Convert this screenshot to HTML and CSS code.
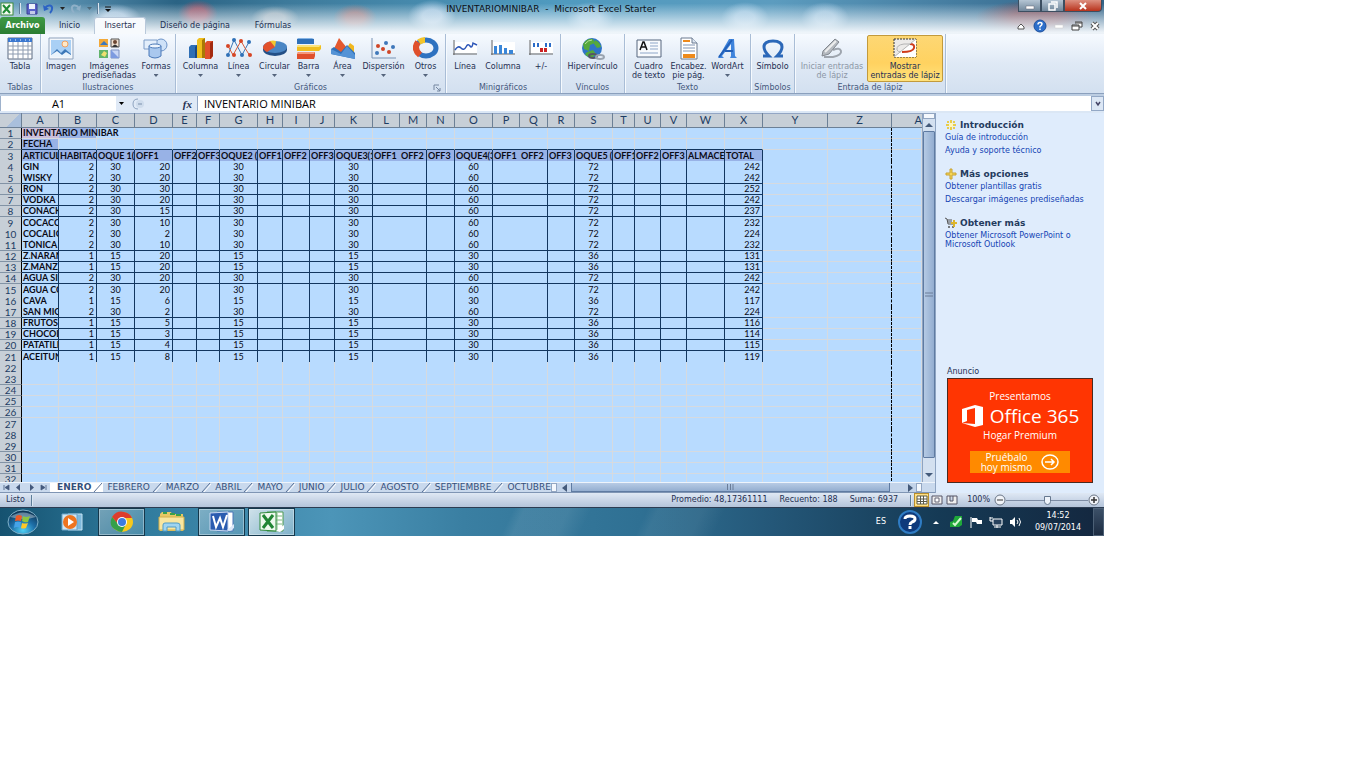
FILE: index.html
```html
<!DOCTYPE html>
<html lang="es">
<head>
<meta charset="utf-8">
<title>INVENTARIOMINIBAR - Microsoft Excel Starter</title>
<link rel="stylesheet" href="styles.css">
</head>
<body>
<main class="screen">
  <header class="titlebar">
    <div class="caption">
      <div class="quick">
        <svg width="14" height="14" viewBox="0 0 14 14"><rect x="1" y="1" width="12" height="12" fill="#f4faf2" stroke="#3c8a3c"/><path d="M3 3l7 8M10 3l-7 8" stroke="#1f8a34" stroke-width="2"/></svg>
        <i class="bar"></i>
        <button aria-label="Guardar"><svg width="12" height="12" viewBox="0 0 12 12"><path d="M1 1h10v10H1z" fill="#5a62c8" stroke="#3a3f94"/><path d="M3 1h6v5H3z" fill="#eef3fc"/><path d="M4 8h5v3H4z" fill="#c5cbe8"/></svg></button>
        <button aria-label="Deshacer"><svg width="12" height="12" viewBox="0 0 12 12"><path d="M2 5C5 1 10 2 9 6q0 2-2 4" fill="none" stroke="#2c63c4" stroke-width="2"/><path d="M0 2l1 6 5-2z" fill="#2c63c4"/></svg></button>
        <i class="drop"></i>
        <button aria-label="Rehacer"><svg width="12" height="12" viewBox="0 0 12 12"><path d="M9 5C6 1 1 2 2 6q0 2 2 4" fill="none" stroke="#8fb0c8" stroke-width="2"/><path d="M11 2l-1 6-4-2z" fill="#8fb0c8"/></svg></button>
        <i class="drop faint"></i>
        <i class="bar"></i>
        <svg width="8" height="8" viewBox="0 0 8 8"><path d="M1 2h6" stroke="#111"/><path d="M1 4h6L4 7z" fill="#111"/></svg>
      </div>
      <h1>INVENTARIOMINIBAR&nbsp; -&nbsp; Microsoft Excel Starter</h1>
      <div class="winbtns">
        <button aria-label="Minimizar"><svg width="12" height="10" viewBox="0 0 12 10"><path d="M2 5h8v3H2z" fill="#fff" stroke="#667" stroke-width=".5"/></svg></button>
        <button aria-label="Restaurar"><svg width="12" height="10" viewBox="0 0 12 10"><path d="M4 1h6v6M2 3h6v6H2z" fill="none" stroke="#fff" stroke-width="1.5"/></svg></button>
        <button class="close" aria-label="Cerrar"><svg width="12" height="10" viewBox="0 0 12 10"><path d="M3 2l6 6M9 2L3 8" stroke="#fff" stroke-width="2"/></svg></button>
      </div>
    </div>
    <nav class="tabs">
      <button class="file">Archivo</button>
      <button class="t1">Inicio</button>
      <button class="t2 on">Insertar</button>
      <button class="t3">Diseño de página</button>
      <button class="t4">Fórmulas</button>
      <div class="helpbtns">
        <svg width="10" height="10" viewBox="0 0 10 10"><path d="M2 6l3-3 3 3v2H2z" fill="#fff" stroke="#555"/></svg>
        <svg width="14" height="14" viewBox="0 0 14 14"><circle cx="7" cy="7" r="6" fill="#2d6fcb" stroke="#1d4f9c"/><path d="M5 5.500q0-2 2-2t2 1.500q0 1-2 2.500v1M7 9.500v1.500" fill="none" stroke="#fff" stroke-width="1.500"/></svg>
        <svg width="10" height="10" viewBox="0 0 10 10"><path d="M1 4h8v3H1z" fill="#fff" stroke="#ccc" stroke-width=".5"/></svg>
        <svg width="12" height="10" viewBox="0 0 12 10"><path d="M4 1h7v5H8M1 4h7v5H1z" fill="#fff" stroke="#444"/><path d="M4 2h7M1 5h7" stroke="#444"/></svg>
        <svg width="10" height="10" viewBox="0 0 10 10"><path d="M2 2l6 6M8 2L2 8" stroke="#555" stroke-width="4"/><path d="M2 2l6 6M8 2L2 8" stroke="#fff" stroke-width="2"/></svg>
      </div>
    </nav>
  </header>

  <section class="ribbon">
    <div class="group g1"><div class="items">
      <button class="it w40"><svg width="26" height="24" viewBox="0 0 26 24"><path d="M1 1h24v21H1z" fill="#fff" stroke="#5c6b80"/><path d="M1 1h24v4H1z" fill="#3b78d0"/><path d="M1 9h24M1 13h24M1 17h24M6 5v17M11 5v17M16 5v17M21 5v17" stroke="#8d9bb0"/><path d="M3 3h1M8 3h1M13 3h1M18 3h1M22 3h1" stroke="#fff"/></svg><span>Tabla</span></button>
    </div><h2>Tablas</h2></div>
    <div class="group g2"><div class="items">
      <button class="it w38"><svg width="26" height="24" viewBox="0 0 26 24"><path d="M1 1h24v21H1z" fill="#f4f7fb" stroke="#8fa3bd"/><path d="M3 3h20v17H3z" fill="#a9d0f5"/><circle cx="17" cy="7" r="3" fill="#ffe9c8" stroke="#f0a060"/><path d="M3 18l6-6 4 4 4-4 6 5v3H3z" fill="#3c78b8"/><path d="M3 18l6-4 5 4 4-3 5 3v2H3z" fill="#eaf4fc"/></svg><span>Imagen</span></button>
      <button class="it w58"><svg width="24" height="24" viewBox="0 0 24 24"><path d="M2 2h9v8H2z" fill="#f3a93a"/><path d="M3 8l4-4 4 4z" fill="#3b78c0"/><path d="M14 2h8v8h-8z" fill="#efe0d0" stroke="#555"/><circle cx="18" cy="5" r="2" fill="#6b4632"/><path d="M15 10q3-5 6 0z" fill="#333"/><path d="M2 13h9v8H2z" fill="#62b36b"/><path d="M4 18l3-4 3 2-2 4z" fill="#f0e070"/><path d="M14 13h8v8h-8z" fill="#c8d6f5" stroke="#7b8fc0"/><path d="M14 13l8 8h-8z" fill="#7d9be0"/></svg><span>Imágenes<br>prediseñadas</span></button>
      <button class="it w36"><svg width="26" height="24" viewBox="0 0 26 24"><circle cx="18" cy="8" r="6" fill="#cfe2f8" stroke="#6d94c8"/><path d="M1 3h13v9H1z" fill="#e3eefb" stroke="#7c9cc8"/><path d="M6 9v10q6 4 12 0V9z" fill="#a9c8ee" stroke="#4a79b8"/><ellipse cx="12" cy="9" rx="6" ry="2" fill="#eef5fd" stroke="#4a79b8"/></svg><span>Formas</span><i class="drop"></i></button>
    </div><h2>Ilustraciones</h2></div>
    <div class="group g3"><div class="items">
      <button class="it w38"><svg width="26" height="24" viewBox="0 0 26 24"><path d="M1 10l2-2h6v13H1z" fill="#2f6fb5"/><path d="M7 10l2-2v13H7z" fill="#1b4a84"/><path d="M9 3l2-2h6v20H9z" fill="#efbf1d"/><path d="M14 3l3-2v20h-3z" fill="#a87a06"/><path d="M17 6l2-2h6v15l-2 3h-6z" fill="#e0502c"/><path d="M22 6l3-2v15l-3 3z" fill="#a32a10"/></svg><span>Columna</span><i class="drop"></i></button>
      <button class="it w38"><svg width="26" height="24" viewBox="0 0 26 24"><path d="M2 18L8 3l8 15 7-13" fill="none" stroke="#3d78b8"/><path d="M2 9l5 9 8-14 4 7 5 8" fill="none" stroke="#d85a38"/><g fill="#3071b8"><circle cx="2" cy="18" r="2"/><circle cx="8" cy="3" r="2"/><circle cx="16" cy="18" r="2"/><circle cx="23" cy="5" r="2"/></g><g fill="#d64525"><circle cx="2" cy="9" r="2"/><circle cx="8" cy="18" r="2"/><circle cx="15" cy="4" r="2"/><circle cx="24" cy="18" r="2"/></g></svg><span>Línea</span><i class="drop"></i></button>
      <button class="it w34"><svg width="26" height="24" viewBox="0 0 26 24"><path d="M1 10v3q0 5 12 6 12-1 12-6v-3z" fill="#234f86"/><ellipse cx="13" cy="10" rx="12" ry="6" fill="#4a86c4"/><path d="M13 10L5 15Q-1 12 2 8q2-3 7-4z" fill="#e2512c"/><path d="M13 10L8 4q3-1 6-0z" fill="#f2c830"/></svg><span>Circular</span><i class="drop"></i></button>
      <button class="it w34"><svg width="26" height="24" viewBox="0 0 26 24"><path d="M1 2h17v5H1z" fill="#2f70b8"/><path d="M1 2h17l-2-1H2z" fill="#86b4e4"/><path d="M1 9l2-1h22v4l-2 2H1z" fill="#f0bf20"/><path d="M1 9l2-1h22l-2 2H1z" fill="#fbe37c"/><path d="M1 16l2-1h16v4l-1 3H1z" fill="#e0502c"/><path d="M1 16l2-1h16l-1 2H1z" fill="#f59a7c"/></svg><span>Barra</span><i class="drop"></i></button>
      <button class="it w34"><svg width="26" height="24" viewBox="0 0 26 24"><path d="M3 14L9 1l8 10 3-4 4 5v9z" fill="#e4582e"/><path d="M17 11l3-5 4 3v9z" fill="#f1b81f"/><path d="M1 12l3-2 7 5 6-7 8 8v6L1 17z" fill="#2f70b8"/><path d="M1 12l10 5 6-8 8 9v4L1 17z" fill="#5493d6"/></svg><span>Área</span><i class="drop"></i></button>
      <button class="it w48"><svg width="26" height="24" viewBox="0 0 26 24"><path d="M1 1v20h24" fill="none" stroke="#7993b4"/><g fill="#cf4628"><circle cx="7" cy="9" r="2"/><circle cx="12" cy="12" r="2"/><circle cx="18" cy="15" r="2"/></g><g fill="#3f78ba"><circle cx="6" cy="16" r="2"/><circle cx="15" cy="6" r="2"/><circle cx="22" cy="10" r="2"/></g></svg><span>Dispersión</span><i class="drop"></i></button>
      <button class="it w36"><svg width="26" height="24" viewBox="0 0 26 24"><ellipse cx="13" cy="11" rx="10" ry="8" fill="none" stroke="#2e72c0" stroke-width="5"/><path d="M7 18Q0 12 5 5" fill="none" stroke="#e0502c" stroke-width="6"/><path d="M6 5q3-2 6-2" fill="none" stroke="#f3c52b" stroke-width="6"/></svg><span>Otros</span><i class="drop"></i></button>
    </div><h2>Gráficos</h2><svg class="launch" width="8" height="8" viewBox="0 0 8 8"><path d="M1 6V1h5M3 3l4 4M7 4v3H4" fill="none" stroke="#7486a0"/></svg></div>
    <div class="group g4"><div class="items">
      <button class="it w38"><svg width="26" height="24" viewBox="0 0 26 24"><path d="M3 5h22v11H3z" fill="#fff"/><path d="M2 3v15M1 17h24" stroke="#666"/><path d="M3 13q3-5 6-2t5-1 4-1 3-3l4 2" fill="none" stroke="#2c56b8" stroke-width="1.500"/></svg><span>Línea</span></button>
      <button class="it w38"><svg width="26" height="24" viewBox="0 0 26 24"><path d="M3 5h22v11H3z" fill="#fff"/><path d="M2 3v15M1 17h24" stroke="#666"/><path d="M4 9h3v8H4zM9 8h3v9H9zM14 11h3v6h-3zM19 13h4v4h-4z" fill="#3a86d8"/></svg><span>Columna</span></button>
      <button class="it w38"><svg width="26" height="24" viewBox="0 0 26 24"><path d="M3 5h22v11H3z" fill="#fff"/><path d="M2 3v15M1 17h24" stroke="#666"/><path d="M5 6h2v4H5zM9 6h2v4H9zM17 6h2v4h-2zM21 6h2v4h-2z" fill="#2b6cc8"/><path d="M12 11h3v4h-3zM16 11h3v4h-3z" fill="#c22"/></svg><span>+/-</span></button>
    </div><h2>Minigráficos</h2></div>
    <div class="group g5"><div class="items">
      <button class="it w60"><svg width="28" height="24" viewBox="0 0 28 24"><circle cx="13" cy="11" r="10" fill="#2f74c8"/><path d="M4 7q4-6 10-5l2 4-5 2-1 6-5-2zM16 3q5 2 6 7l-4 1-3-4zM8 15l6-2 3 4-4 4q-5-1-7-4z" fill="#55a83c"/><path d="M6 7q3-4 7-4" stroke="#b8e0a0" fill="none"/><ellipse cx="14" cy="19" rx="4" ry="2" fill="none" stroke="#556" stroke-width="2"/><ellipse cx="21" cy="20" rx="4" ry="2" fill="none" stroke="#9aa4b0" stroke-width="2"/></svg><span>Hipervínculo</span></button>
    </div><h2>Vínculos</h2></div>
    <div class="group g6"><div class="items">
      <button class="it w40"><svg width="26" height="24" viewBox="0 0 26 24"><path d="M1 3h24v17H1z" fill="#f8fafd" stroke="#56677f"/><path d="M4 13l3-8h1l3 8M5 10h5" fill="none" stroke="#111" stroke-width="1.500"/><path d="M14 6h8M14 9h8M14 12h8M4 16h18" stroke="#8ea6c8"/></svg><span>Cuadro<br>de texto</span></button>
      <button class="it w40"><svg width="22" height="24" viewBox="0 0 22 24"><path d="M3 1h11l5 5v16H3z" fill="#fff" stroke="#6b7a90"/><path d="M14 1v5h5" fill="#dde6f2" stroke="#6b7a90"/><path d="M5 4h7M5 18h12M5 20h12" stroke="#ee8a1c" stroke-width="2"/><path d="M5 8h12M5 11h12M5 14h12" stroke="#8195b4"/></svg><span>Encabez.<br>pie pág.</span></button>
      <button class="it w38"><svg width="24" height="24" viewBox="0 0 24 24"><path d="M13 2h5l1 17 2 2h-7l1-2V7L6 19l2 2H2z" fill="#3f84dc"/><path d="M3 20L16 3M9 14h8" fill="none" stroke="#2360b8" stroke-width="2"/></svg><span>WordArt</span><i class="drop"></i></button>
    </div><h2>Texto</h2></div>
    <div class="group g7"><div class="items">
      <button class="it w44"><svg width="24" height="24" viewBox="0 0 24 24"><path d="M2 19h6q-5-5-5-9 0-6 9-6t9 6q0 4-5 9h6" fill="none" stroke="#2c68b8" stroke-width="3"/></svg><span>Símbolo</span></button>
    </div><h2>Símbolos</h2></div>
    <div class="group g8"><div class="items">
      <button class="it w70" disabled><svg width="24" height="24" viewBox="0 0 24 24"><path d="M4 20h9q9-2 8-6t-8-1" fill="none" stroke="#9ea5ae" stroke-width="2"/><path d="M3 14L15 2l4 3L9 17l-7 2z" fill="#b5bac0" stroke="#83888f"/><path d="M5 15L16 4" stroke="#eee" stroke-width="2"/></svg><span>Iniciar entradas<br>de lápiz</span></button>
      <button class="it w76 sel"><svg width="26" height="24" viewBox="0 0 26 24"><path d="M2 2h22v18H2z" fill="#eceae8" stroke="#333" stroke-dasharray="2 1"/><path d="M24 2v18H2z" fill="#fff"/><path d="M18 7q5 0 4 4t-12 4" fill="none" stroke="#cf3d1c" stroke-width="2"/><path d="M2 20L24 2M18 7H12q-8 1-7 6 1 2 4 2" fill="none" stroke="#b4b4b4"/></svg><span>Mostrar<br>entradas de lápiz</span></button>
    </div><h2>Entrada de lápiz</h2></div>
  </section>

  <section class="formula">
    <input class="namebox" aria-label="Cuadro de nombres" value="A1">
    <i class="drop"></i>
    <div class="fx"><svg width="14" height="12" viewBox="0 0 14 12"><path d="M6 1q-5 0-5 5t5 5" fill="none" stroke="#8fa4c0"/><circle cx="8" cy="6" r="4" fill="#cfdcec"/><path d="M6 6h4" stroke="#a5b6cc" stroke-width="2"/></svg><em>fx</em></div>
    <input class="fbar" aria-label="Barra de fórmulas" value="INVENTARIO MINIBAR">
    <button aria-label="Expandir"><svg width="8" height="8" viewBox="0 0 8 8"><path d="M2 2l2 3 2-3" fill="none" stroke="#446" stroke-width="1.5"/></svg></button>
  </section>

  <section class="work">
    <div class="book">
      <div class="pane">
        <div class="gridwrap"><table class="grid" id="grid"></table></div>
        <div class="vscroll">
          <i class="split"></i>
          <button aria-label="Subir"><svg width="8" height="5" viewBox="0 0 8 5"><path d="M0 4l4-4 4 4z" fill="#445a7a"/></svg></button>
          <div class="vthumb"><svg width="8" height="6" viewBox="0 0 8 6"><path d="M0 1h8M0 4h8" stroke="#6a7d98"/></svg></div>
          <button aria-label="Bajar"><svg width="8" height="5" viewBox="0 0 8 5"><path d="M0 1h8L4 5z" fill="#445a7a"/></svg></button>
        </div>
      </div>
      <div class="sheetbar">
        <div class="sheetnav">
          <button aria-label="Primera"><svg width="7" height="7" viewBox="0 0 7 7"><path d="M1 1v5M6 1v5L2 3.500z" stroke="#44597c" fill="#44597c" stroke-width=".8"/></svg></button>
          <button aria-label="Anterior"><svg width="7" height="7" viewBox="0 0 7 7"><path d="M5 0v7L1 3.500z" fill="#44597c"/></svg></button>
          <button aria-label="Siguiente"><svg width="7" height="7" viewBox="0 0 7 7"><path d="M2 0v7l4-3.500z" fill="#44597c"/></svg></button>
          <button aria-label="Última"><svg width="7" height="7" viewBox="0 0 7 7"><path d="M6 1v5M1 1v5l4-2.500z" stroke="#44597c" fill="#44597c" stroke-width=".8"/></svg></button>
        </div>
        <div class="sheets" id="sheets"></div>
        <i class="split"></i>
        <div class="hscroll">
          <button aria-label="Izquierda"><svg width="5" height="8" viewBox="0 0 5 8"><path d="M5 0v8L0 4z" fill="#445a7a"/></svg></button>
          <div class="hthumb"><svg width="8" height="6" viewBox="0 0 8 6"><path d="M1.500 0v6M4.500 0v6M7 0v6" stroke="#6a7d98"/></svg></div>
          <button aria-label="Derecha"><svg width="5" height="8" viewBox="0 0 5 8"><path d="M0 0v8l5-4z" fill="#445a7a"/></svg></button>
        </div>
        <i class="split"></i>
      </div>
    </div>
    <aside class="panel">
      <h3><svg width="12" height="12" viewBox="0 0 12 12"><path d="M2 2h2v2H2zM5 1h2v3H5zM8 2h2v2H8zM1 5h3v2H1zM8 5h3v2H8zM2 8h2v2H2zM5 8h2v3H5zM8 8h2v2H8z" fill="#e8cc4c"/><path d="M4 4h4v4H4z" fill="#fff6b8"/></svg>Introducción</h3>
      <a href="#guia">Guía de introducción</a>
      <a href="#ayuda">Ayuda y soporte técnico</a>
      <h3><svg width="12" height="12" viewBox="0 0 12 12"><path d="M5 1h2v4h4v2H7v4H5V7H1V5h4z" fill="#f5d657" stroke="#c8a232"/></svg>Más opciones</h3>
      <a href="#plantillas">Obtener plantillas gratis</a>
      <a href="#imagenes">Descargar imágenes prediseñadas</a>
      <h3><svg width="12" height="12" viewBox="0 0 12 12"><path d="M0 1l2 1 1 5h5M2 3h5M3 5h4" fill="none" stroke="#555"/><circle cx="4" cy="10" r="1" fill="#555"/><circle cx="8" cy="10" r="1" fill="#555"/><path d="M9 3v7M6 6h6" stroke="#dcb52c" stroke-width="2"/></svg>Obtener más</h3>
      <a class="two" href="#mas">Obtener Microsoft PowerPoint o<br>Microsoft Outlook</a>
      <p class="adlabel">Anuncio</p>
      <div class="ad">
        <p>Presentamos</p>
        <div class="brand"><svg width="24" height="24" viewBox="0 0 24 24"><path d="M1 5l13-4 8 2v18l-8 2-13-4 13 1V4L6 6v11l-5 2z" fill="#fff"/></svg><b>Office 365</b></div>
        <p>Hogar Premium</p>
        <button>Pruébalo<br>hoy mismo<svg width="18" height="16" viewBox="0 0 18 16"><ellipse cx="9" cy="8" rx="8" ry="7" fill="none" stroke="#fff" stroke-width="1.500"/><path d="M4 8h9M10 5l3 3-3 3" fill="none" stroke="#fff" stroke-width="1.500"/></svg></button>
      </div>
    </aside>
  </section>

  <footer class="status">
    <span class="ready">Listo</span><i class="bar"></i>
    <span class="avg">Promedio: 48,17361111</span>
    <span>Recuento: 188</span>
    <span>Suma: 6937</span>
    <i class="bar"></i>
    <div class="views">
      <button class="on" aria-label="Normal"><svg width="12" height="10" viewBox="0 0 12 10"><path d="M1 1h10v8H1zM1 4h10M1 6.500h10M4.500 1v8M7.500 1v8" fill="#fff" stroke="#5a5a48"/></svg></button>
      <button aria-label="Diseño"><svg width="12" height="10" viewBox="0 0 12 10"><path d="M1 1h10v8H1z" fill="#eee" stroke="#556"/><path d="M4 3h4v4H4z" fill="#fff" stroke="#667"/></svg></button>
      <button aria-label="Saltos"><svg width="12" height="10" viewBox="0 0 12 10"><path d="M1 1h10v8H1zM4 1v5h3V1" fill="#eee" stroke="#556"/></svg></button>
    </div>
    <span class="pct">100%</span>
    <button class="round" aria-label="Alejar"><svg width="12" height="12" viewBox="0 0 12 12"><circle cx="6" cy="6" r="5" fill="#f0f3f8" stroke="#6b7788"/><path d="M3 6h6" stroke="#333"/></svg></button>
    <input type="range" aria-label="Zoom" min="0" max="100" value="50">
    <button class="round" aria-label="Acercar"><svg width="12" height="12" viewBox="0 0 12 12"><circle cx="6" cy="6" r="5" fill="#f0f3f8" stroke="#6b7788"/><path d="M3 6h6M6 3v6" stroke="#333" stroke-width="1.500"/></svg></button>
  </footer>

  <footer class="taskbar">
    <button class="orb" aria-label="Inicio"><svg width="32" height="28" viewBox="0 0 32 28"><defs><radialGradient id="o" cx=".5" cy=".85" r=".8"><stop offset="0" stop-color="#4fd0f4"/><stop offset=".5" stop-color="#1d6fa8"/><stop offset="1" stop-color="#0e3554"/></radialGradient></defs><ellipse cx="16" cy="14" rx="15" ry="12" fill="url(#o)" stroke="#7fb0c8"/><path d="M3 9q13-9 26 0-12 4-26 0z" fill="#fff" opacity=".35"/><path d="M9 8q3-2 6 0l-1 5q-3-1-6 0z" fill="#ee5a28"/><path d="M16 8q3 2 7 0l-2 6q-3 1-6-1z" fill="#8cc63e"/><path d="M8 14q3-1 6 0l-1 6q-3-2-6 0z" fill="#45a4e8"/><path d="M15 15q3 1 6 0l-2 5q-3 1-5-0z" fill="#fcc826"/></svg></button>
    <button class="app" aria-label="Reproductor"><svg width="22" height="20" viewBox="0 0 22 20"><path d="M7 2h14v16H7z" fill="#7fb9dc" stroke="#c5e4f4"/><path d="M1 2h15v16H1z" fill="#cfe6f5" stroke="#6aa4c8"/><circle cx="9" cy="10" r="7" fill="#ee7420"/><path d="M7 6l6 4-6 4z" fill="#fff"/></svg></button>
    <button class="app open" aria-label="Chrome"><svg width="24" height="22" viewBox="0 0 24 22"><ellipse cx="12" cy="11" rx="11" ry="10" fill="#f8c81c"/><path d="M2 6Q7-1 14 1q6 1 8 6H12L8 13z" fill="#dd3c2c"/><path d="M2 6q-4 9 4 13 3 2 6 2l4-8-7 1z" fill="#35a04a"/><circle cx="12" cy="11" r="5" fill="#fff"/><circle cx="12" cy="11" r="4" fill="#3c7ce0"/></svg></button>
    <button class="app" aria-label="Explorador"><svg width="28" height="22" viewBox="0 0 28 22"><path d="M2 3l2-2h9l1 2h11v17H2z" fill="#e7c866"/><path d="M5 2h4M12 3h5M18 4h5" stroke="#3aa04a" stroke-width="2"/><path d="M1 6h25v13H1z" fill="#f8e6a0" stroke="#d2ae48"/><path d="M5 20v-6q0-2 2-2h12q3 0 3 2v6h-4v-4H9v4z" fill="#9fd4f0" stroke="#4f9cc8"/></svg></button>
    <button class="app open" aria-label="Word"><svg width="26" height="22" viewBox="0 0 26 22"><path d="M8 1h16v19H8z" fill="#fff" stroke="#4b76b8"/><path d="M1 2l18-1v19L1 19z" fill="#2a5cb0" stroke="#c8d8f0"/><path d="M4 5l3 11 4-9 3 9 4-12" fill="none" stroke="#fff" stroke-width="2"/><path d="M18 19l7-6v4l-4 3z" fill="#dce8f8"/></svg></button>
    <button class="app open lit" aria-label="Excel"><svg width="26" height="22" viewBox="0 0 26 22"><path d="M8 1h16v19H8z" fill="#fff" stroke="#4c9a50"/><path d="M13 5h10M13 9h10M13 13h10M18 2v17" stroke="#7dba80"/><path d="M1 2l16-1v19L1 19z" fill="#eef8ee" stroke="#2f8a3c"/><path d="M4 4l10 13M14 4L4 17" stroke="#218434" stroke-width="3"/><path d="M17 20l8-6v4l-4 3z" fill="#fff"/></svg></button>
    <div class="tray">
      <span class="lang">ES</span>
      <svg width="26" height="24" viewBox="0 0 26 24"><circle cx="13" cy="12" r="11" fill="#0e3a7c" stroke="#2f7cc4" stroke-width="2"/><path d="M8 9q0-3 5-3t5 3q0 2-3 3-2 1-2 3M13 16v3" fill="none" stroke="#fff" stroke-width="3"/></svg>
      <svg width="14" height="8" viewBox="0 0 14 8"><path d="M4 6h6L7 3z" fill="#fff"/></svg>
      <svg width="14" height="14" viewBox="0 0 14 14"><path d="M1 7l3-1 2-5h7v9l-3 2H1z" fill="#1fa83a"/><path d="M4 8l2 2 6-7" fill="none" stroke="#d4f8d0" stroke-width="2"/></svg>
      <svg width="14" height="14" viewBox="0 0 14 14"><path d="M2 2v11" stroke="#fff"/><path d="M3 3h5l1 2h4v4H8L7 7H3z" fill="#fff"/></svg>
      <svg width="14" height="14" viewBox="0 0 14 14"><path d="M4 4h9v6H4zM8 10v3M5 12h7M1 2v4h3M1 3h3" fill="#27415c" stroke="#fff"/></svg>
      <svg width="14" height="14" viewBox="0 0 14 14"><path d="M1 5h2l3-3v10L3 9H1z" fill="#fff"/><path d="M8 5q2 2 0 4M10 3q3 4 0 8" fill="none" stroke="#fff"/></svg>
      <time>14:52<br>09/07/2014</time>
      <button class="desk" aria-label="Mostrar escritorio"></button>
    </div>
  </footer>
</main>
<script src="app.js"></script>
</body>
</html>
```

FILE: styles.css
```css
* { box-sizing: border-box; }
body { margin: 0; background: #fff; }
button, input { font: inherit; color: inherit; margin: 0; padding: 0; border: 0; background: none; }
button { display: flex; align-items: center; justify-content: center; }
svg { display: block; flex: none; }
h1, h2, h3, p { margin: 0; font-weight: 400; }
.screen { max-width: 1104px; display: flex; flex-direction: column; overflow: hidden; font: 8px/10px "DejaVu Sans", sans-serif; color: #1e2f52; }
.drop { flex: none; width: 5px; height: 3px; background: #222; clip-path: polygon(0 0, 100% 0, 50% 100%); }
.faint { opacity: .4; }
.bar { flex: none; width: 2px; height: 11px; border-left: 1px solid #5d7d99; border-right: 1px solid #dbe7f2; }

/* Title bar */
.titlebar {
  background:
    linear-gradient(to bottom, rgba(240,246,251,0) 10%, rgba(240,246,251,.6) 60%, rgba(244,248,252,.96) 95%),
    radial-gradient(ellipse 20px 14px at 198px 14px, rgba(190,80,96,.7) 40%, transparent),
    radial-gradient(ellipse 22px 14px at 355px 18px, rgba(200,110,100,.6) 40%, transparent),
    radial-gradient(ellipse 24px 12px at 275px 18px, rgba(190,195,200,.7) 40%, transparent),
    radial-gradient(ellipse 26px 14px at 115px 18px, rgba(200,222,244,.7) 40%, transparent),
    radial-gradient(ellipse 24px 16px at 432px 16px, rgba(205,225,245,.7) 40%, transparent),
    radial-gradient(ellipse 24px 16px at 590px 18px, rgba(200,225,245,.6) 40%, transparent),
    radial-gradient(ellipse 24px 16px at 745px 18px, rgba(200,225,245,.6) 40%, transparent),
    radial-gradient(ellipse 24px 16px at 825px 18px, rgba(200,225,245,.6) 40%, transparent),
    radial-gradient(ellipse 60px 18px at 1035px 18px, rgba(140,60,66,.7) 40%, transparent),
    linear-gradient(to right, #6fa5c4, #2a6384 16%, #3d7a9b 26%, #4f9abf 50%, #5c9cbf 70%, #326387);
}
.caption { display: flex; height: 17px; align-items: center; }
.quick { display: flex; align-items: center; gap: 5px; flex: 1; }
.caption h1 { font: 9px/12px "DejaVu Sans", sans-serif; color: #0b0f14; white-space: nowrap; }
.winbtns { flex: 1; display: flex; justify-content: flex-end; align-self: flex-start; padding-right: 2px; }
.winbtns button { width: 23px; height: 12px; background: linear-gradient(#b5c5d4, #71879b); border: 1px solid #3c4e60; border-top: 0; }
.winbtns .close { width: 38px; background: linear-gradient(#dd9080, #b8321c); border-radius: 0 0 4px 0; }
.tabs { display: flex; height: 17px; }
.tabs button { white-space: nowrap; }
.tabs .file { width: 45px; background: linear-gradient(#3f9a45, #2b7d33); color: #fff; font-weight: 700; border-radius: 3px 3px 0 0; }
.t1 { width: 49px; }
.t2 { width: 52px; }
.t3 { width: 98px; }
.t4 { width: 58px; }
.tabs .on { background: #f7fafd; border: 1px solid #b8c8da; border-bottom: 0; border-radius: 3px 3px 0 0; }
.helpbtns { margin-left: auto; display: flex; align-items: center; gap: 7px; padding-right: 4px; }

/* Ribbon */
.ribbon { display: flex; height: 60px; background: linear-gradient(#f6faff, #dfe9f5 50%, #d3e0f0); border-bottom: 1px solid #8ba0bd; }
.group { display: flex; flex-direction: column; align-items: center; border-right: 1px solid #a9bdd6; box-shadow: 1px 0 #f6fafe; position: relative; flex: none; }
.g1 { width: 41px; }
.g2 { width: 135px; }
.g3 { width: 270px; }
.g4 { width: 115px; }
.g5 { width: 64px; }
.g6 { width: 126px; }
.g7 { width: 44px; }
.g8 { width: 151px; }
.items { display: flex; flex: 1; padding-top: 1px; }
.g3 .items { padding-left: 4px; }
.group h2 { font-size: 8px; line-height: 12px; color: #44587c; white-space: nowrap; }
.launch { position: absolute; right: 4px; bottom: 1px; }
.it { flex-direction: column; justify-content: flex-start; padding-top: 2px; height: 47px; line-height: 9px; }
.it span { white-space: nowrap; padding-top: 1px; }
.it .drop { background: #55647c; margin-top: 3px; }
.it:disabled { color: #8d97a6; }
.it.sel { background: linear-gradient(#fdd774, #ffd260 60%, #ffe27c); border: 1px solid #c29a3c; border-radius: 2px; padding-top: 1px; }
.w34 { width: 34px; }
.w36 { width: 36px; }
.w38 { width: 38px; }
.w40 { width: 40px; }
.w44 { width: 42px; }
.w48 { width: 48px; }
.w58 { width: 58px; }
.w60 { width: 60px; }
.w70 { width: 70px; }
.w76 { width: 76px; }

/* Formula bar */
.formula { display: flex; align-items: center; height: 19px; background: #dfe9f6; border-top: 2px solid #bccde2; border-bottom: 2px solid #dbe7f5; font-size: 11px; }
.formula input { height: 15px; background: #fff; color: #000; outline: 0; font-family: "Open Sans", sans-serif; min-width: 0; }
.formula .namebox { width: 116px; text-align: center; border-left: 1px solid #9eb2cc; }
.formula > .drop { box-sizing: content-box; margin: 0 8px 0 3px; background: #000; }
.fx { display: flex; align-items: center; justify-content: space-between; width: 66px; height: 15px; border-right: 1px solid #93a8c6; padding-right: 5px; }
.fx em { font: italic 700 11px/12px "Liberation Serif", serif; }
.formula .fbar { flex: 1; padding-left: 6px; }
.formula button { width: 13px; height: 15px; border: 1px solid #93a8c6; background: #dce7f5; }

/* Workbook */
.work { display: flex; background: #dfecfc; }
.book { flex: 1; min-width: 0; border-right: 1px solid #8ea4c2; }
.pane { display: flex; height: 369px; }
.gridwrap { flex: 1; min-width: 0; overflow: hidden; background: #b8dbff; }
.grid { table-layout: fixed; width: 100%; border-collapse: separate; border-spacing: 0; font: 9px/10px Lato, sans-serif; color: #0a0a14; }
.grid th, .grid td { padding: 0; height: 11px; white-space: nowrap; font-weight: 400; }
.grid thead th { height: 15px; background: #c7cfd7; color: #1d3c63; border-right: 1px solid #6c8096; border-bottom: 1px solid #6c8096; font-size: 11px; line-height: 12px; box-shadow: inset 0 1px #93a6c4; }
.grid thead th:first-child { background: linear-gradient(135deg, #c7cfd7 60%, #a9bfdc 60%); }
.grid thead th:last-child { text-align: right; overflow: hidden; border-right: 0; }
.grid tbody th { background: #c7cfd7; color: #1d3c63; border-right: 1px solid #000; font-size: 10px; }
.grid td { border-right: 1px solid #d6dadf; text-align: center; }
.grid .line td { border-bottom: 1px solid #d6dadf; }
.grid .line th { border-bottom: 1px solid #8293a5; }
.grid .tall td, .grid .tall th { height: 12px; }
.grid td.r { text-align: right; padding-right: 2px; }
.grid td.l { text-align: left; font-weight: 700; padding-left: 1px; overflow: hidden; }
.grid td.boxed { border-right-color: #12365f; }
.grid .line td.boxed, .grid .line td.above { border-bottom-color: #12365f; }
.grid td.merge { border-right: 0; }
.grid td.tint { background: #98b2e6; }
.grid td.active { background: #cbbedb; overflow: visible; border-right: 0; }
.grid td.brk { border-right: 1px dashed #000; }

.split { flex: none; background: #f4f8fd; border: 1px solid #92a6c2; }
.vscroll { width: 13px; display: flex; flex-direction: column; background: #d3e0f0; border-left: 1px solid #8ea4c2; }
.vscroll .split { height: 6px; }
.vscroll button { height: 12px; }
.vthumb { flex: 1; display: flex; align-items: center; justify-content: center; background: linear-gradient(to right, #b5cae4, #93add0); border: 1px solid #5f7ba2; border-radius: 1px; }
.vscroll .vthumb + button { height: 24px; padding-top: 9px; }
.sheetbar { display: flex; height: 11px; background: #c9d9ed; border-top: 1px solid #eef4fb; border-bottom: 1px solid #7f95b4; padding-right: 13px; }
.sheetnav { display: flex; width: 50px; align-items: center; justify-content: space-around; }
.sheets { display: flex; }
.sheet { white-space: nowrap; font: 9px/9px "DejaVu Sans", sans-serif; color: #34507c; padding-left: 4px; gap: 2px; }
.sheet.on { background: #fff; font-weight: 700; padding-left: 7px; }
.sheetbar .split { width: 6px; }
.hscroll { flex: 1; display: flex; background: #c3d4ea; padding-left: 2px; }
.hscroll button { width: 12px; }
.hthumb { flex: 1; margin-right: 14px; display: flex; align-items: center; justify-content: center; background: linear-gradient(#b7cbe5, #94aed0); border: 1px solid #5f7ba2; border-top: 0; }

/* Task pane */
.panel { width: 168px; flex: none; padding: 5px 11px 0 9px; display: flex; flex-direction: column; }
.panel h3 { display: flex; align-items: center; gap: 3px; font-size: 9px; line-height: 14px; font-weight: 700; color: #243b5e; white-space: nowrap; margin-bottom: 1px; }
.panel a { color: #1444b4; text-decoration: none; line-height: 9px; margin-bottom: 4px; white-space: nowrap; }
.panel a + h3 { margin-top: 8px; }
.panel .two { margin-bottom: 0; }
.adlabel { margin-top: 117px; padding-left: 2px; line-height: 12px; }
.ad { margin-left: 2px; height: 105px; background: #ff3502; border: 1px solid #4a2a20; color: #fff; display: flex; flex-direction: column; align-items: center; padding-top: 11px; font: 10px/13px "Open Sans", sans-serif; }
.ad > * { flex: none; }
.brand { display: flex; align-items: center; gap: 5px; height: 26px; }
.brand b { font: 19px/26px "Open Sans", sans-serif; white-space: nowrap; }
.ad button { width: 100px; height: 22px; margin-top: 9px; background: #ff8a00; line-height: 10px; gap: 9px; text-align: center; }

/* Status bar */
.status { display: flex; align-items: center; height: 15px; background: linear-gradient(#dfe8f4, #b4c4da); border-bottom: 1px solid #2c3c52; white-space: nowrap; gap: 12px; padding-right: 4px; }
.ready { padding-left: 6px; margin-right: -6px; }
.avg { margin-left: auto; }
.views { display: flex; gap: 0; margin: 0 -4px 0 -10px; }
.views button { width: 15px; height: 14px; }
.views .on { background: #ffe083; border: 1px solid #b98f2c; }
.pct { margin-right: -8px; }
.status input { appearance: none; width: 82px; height: 12px; margin: 0 -12px; background: linear-gradient(#7d8ca4, #7d8ca4) center / 100% 1px no-repeat; }
.status input::-webkit-slider-thumb { appearance: none; width: 7px; height: 9px; background: #eef3fa; border: 1px solid #66788f; border-radius: 0 0 4px 4px; }

/* Taskbar */
.taskbar { display: flex; align-items: center; height: 28px; gap: 3px; background: linear-gradient(115deg, transparent 46%, rgba(255,255,255,.08) 47% 51%, transparent 53% 58%, rgba(255,255,255,.06) 59% 63%, transparent 65%), linear-gradient(to right, #155270, #2f7a9c 12%, #4c95b8 30%, #3a7fa2 42%, #2f7093 58%, #245778 70%, #153a55 85%, #14273f); }
.orb { width: 45px; height: 28px; }
.app { width: 47px; height: 28px; }
.app.open { background: linear-gradient(135deg, rgba(255,255,255,.35), rgba(255,255,255,.12)); border: 1px solid #15384c; box-shadow: inset 0 0 0 1px rgba(255,255,255,.35); }
.app.lit { background: linear-gradient(135deg, rgba(255,255,255,.75), rgba(255,255,255,.3)); }
.tray { margin-left: auto; display: flex; align-items: center; gap: 6px; color: #fff; }
.lang { padding-right: 5px; }
.tray time { text-align: center; width: 58px; line-height: 12px; }
.desk { width: 11px; height: 28px; border: 1px solid #4c6076; background: linear-gradient(#3c5068, #1c2c42); }
```

FILE: app.js
```javascript
const widths = [37,38,38,38,24,23,38,25,27,25,38,27,27,28,38,27,28,27,38,22,26,26,38,38,65,64];
const letters = [...'ABCDEFGHIJKLMNOPQRSTUVWXYZ'];
const heads = ['ARTICUL','HABITAC','OQUE 1(1','OFF1','OFF2','OFF3','OQUE2 (1','OFF1','OFF2','OFF3','OQUE3(1','OFF1','OFF2','OFF3','OQUE4(3','OFF1','OFF2','OFF3','OQUE5 (3','OFF1','OFF2','OFF3','ALMACEN','TOTAL'];
// name, rooms, stock per floor, OFF1, total
const stock = [
  ['GIN',2,30,20,242],['WISKY',2,30,20,242],['RON',2,30,30,252],['VODKA',2,30,20,242],
  ['CONACK',2,30,15,237],['COCACOL',2,30,10,232],['COCALIG',2,30,2,224],['TÓNICA',2,30,10,232],
  ['Z.NARAN',1,15,20,131],['Z.MANZA',1,15,20,131],['AGUA SIN',2,30,20,242],['AGUA CO',2,30,20,242],
  ['CAVA',1,15,6,117],['SAN MIG',2,30,2,224],['FRUTOS',1,15,5,116],['CHOCOLA',1,15,3,114],
  ['PATATILL',1,15,4,115],['ACEITUN',1,15,8,119]
];
const grid = document.getElementById('grid');

let html = '<colgroup><col style="width:22px">' + widths.map(w => `<col style="width:${w}px">`).join('') + '<col></colgroup>';
html += '<thead><tr><th></th>' + letters.map(l => `<th>${l}</th>`).join('') + '<th>A</th></tr></thead><tbody>';
for (let n = 1; n <= 32; n++) {
  const m = n % 6;
  html += `<tr class="${m === 3 || m === 4 ? '' : 'line'}${m === 4 ? ' tall' : ''}"><th>${n}</th>`;
  const item = stock[n - 4];
  for (let c = 0; c < 27; c++) {
    const cls = [];
    let text = '';
    if (n >= 3 && n <= 21 && c < 24) cls.push('boxed');
    if (n === 2 && c < 24) cls.push('above');
    if (c === 11 || c === 15) cls.push('merge');
    if (c === 25) cls.push('brk');
    if (n === 1 && c === 0) { cls.push('l', 'active'); text = 'INVENTARIO MINIBAR'; }
    if (n === 1 && c === 1) cls.push('tint');
    if (n === 2 && c === 0) { cls.push('l', 'tint'); text = 'FECHA'; }
    if (n === 3 && c < 24) { cls.push('l', 'tint'); text = heads[c]; }
    if (item) {
      if (c === 0) { cls.push('l'); text = item[0]; }
      if (c === 1) { cls.push('r'); text = item[1]; }
      if (c === 2 || c === 6 || c === 10) text = item[2];
      if (c === 3) { cls.push('r'); text = item[3]; }
      if (c === 14) text = item[2] * 2;
      if (c === 18) text = item[2] === 30 ? 72 : 36;
      if (c === 23) { cls.push('r'); text = item[4]; }
    }
    html += `<td class="${cls.join(' ')}">${text}</td>`;
  }
  html += '</tr>';
}
grid.innerHTML = html + '</tbody>';

const slash = '<svg width="10" height="9" viewBox="0 0 10 9"><path d="M1 9L9 0" stroke="#5b7398"/><path d="M3 9L10 1" stroke="#fff"/></svg>';
document.getElementById('sheets').innerHTML =
  ['ENERO','FEBRERO','MARZO','ABRIL','MAYO','JUNIO','JULIO','AGOSTO','SEPTIEMBRE','OCTUBRE']
    .map((s, i, all) => `<button class="sheet${i ? '' : ' on'}">${s}${i < all.length - 1 ? slash : ''}</button>`).join('');
```
